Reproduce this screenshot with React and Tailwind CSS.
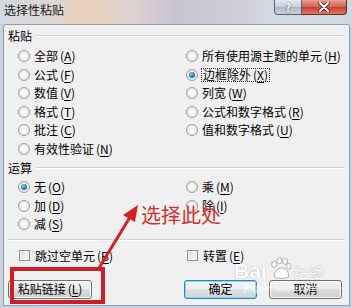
import React from "react";

const Key = ({ k }) => (
  <span className="ml-[2px]">
    (<span className="underline underline-offset-2">{k}</span>)
  </span>
);

const Radio = ({ checked }) => (
  <span className="w-[12px] h-[12px] shrink-0 rounded-full border border-[#9c9c9c] bg-[radial-gradient(circle_at_50%_50%,#fafafa_30%,#d9d9d9_100%)] flex items-center justify-center">
    {checked && (
      <span className="w-[6px] h-[6px] rounded-full bg-[radial-gradient(circle_at_40%_35%,#8fd0f0_0%,#2a77a8_55%,#174a6e_100%)]" />
    )}
  </span>
);

const Check = () => (
  <span className="w-[11px] h-[11px] shrink-0 border border-[#8f8f8f] bg-[linear-gradient(135deg,#dcdcdc,#fbfbfb)] shadow-[inset_0_0_0_1px_#f4f4f4]" />
);

const Option = ({ label, k, checked, focus }) => (
  <div className="h-[18.5px] flex items-center gap-[4px]">
    <Radio checked={checked} />
    <span
      className={
        focus
          ? "outline outline-1 outline-dotted outline-[#333] px-[1px] leading-[12px]"
          : "leading-[12px]"
      }
    >
      {label}
      <Key k={k} />
    </span>
  </div>
);

const Group = ({ title }) => (
  <div className="flex items-center gap-[4px] pl-[4px] pr-[4px] h-full">
    <span>{title}</span>
    <div className="flex-1 border-t border-[#d5d5d5] border-b border-b-white" />
  </div>
);

const App = () => {
  return (
    <div
      className="relative w-[352px] h-[308px] overflow-hidden bg-[#c9d3de] text-[12px] text-black"
      style={{ fontFamily: '"Noto Sans CJK SC", "Liberation Sans", sans-serif' }}
    >
      {/* title bar */}
      <div className="h-[24px] flex items-start bg-[linear-gradient(90deg,#d3dae3_0%,#dcd6d2_15%,#e9cfba_25%,#dcd3d3_38%,#c8c3d0_50%,#cdc9d6_62%,#d4dae3_80%,#cfd8e2_100%)]">
        <span className="pl-[4px] pt-[3px] leading-[14px] text-[12px] text-[#1b1b1b]">选择性粘贴</span>
        <div className="ml-auto mr-[5px] flex">
          <div className="w-[28px] h-[15px] rounded-bl-[4px] border border-t-0 border-[#5b6470] bg-[linear-gradient(#e6ebf0,#c5ced8_50%,#aeb9c6_51%,#c9d2dc)] flex items-center justify-center text-[11px] leading-none font-bold text-white [text-shadow:0_0_2px_#33414f]">
            ?
          </div>
          <div className="w-[45px] h-[15px] rounded-br-[4px] border border-l-0 border-t-0 border-[#6b2a24] bg-[linear-gradient(#e8a293,#d0604f_50%,#c4402e_51%,#d87d66)] flex items-center justify-center">
            <svg width="12" height="10" viewBox="0 0 12 10">
              <path d="M2 1 L10 9 M10 1 L2 9" stroke="#3a1510" strokeWidth="3.4" strokeLinecap="round" />
              <path d="M2 1 L10 9 M10 1 L2 9" stroke="#fff" strokeWidth="2" strokeLinecap="round" />
            </svg>
          </div>
        </div>
      </div>

      {/* dialog body */}
      <div className="ml-[3px] w-[347px] h-[282px] border border-[#8e9cab] rounded-t-[3px] bg-[#f0f0f0] flex flex-col">
        <div className="h-[22px]">
          <Group title="粘贴" />
        </div>
        <div className="grid grid-cols-[168px_1fr] pl-[14px]">
          <div className="flex flex-col">
            <Option label="全部" k="A" />
            <Option label="公式" k="F" />
            <Option label="数值" k="V" />
            <Option label="格式" k="T" />
            <Option label="批注" k="C" />
            <Option label="有效性验证" k="N" />
          </div>
          <div className="flex flex-col">
            <Option label="所有使用源主题的单元" k="H" />
            <Option label="边框除外" k="X" checked focus />
            <Option label="列宽" k="W" />
            <Option label="公式和数字格式" k="R" />
            <Option label="值和数字格式" k="U" />
          </div>
        </div>

        <div className="h-[20px]">
          <Group title="运算" />
        </div>
        <div className="grid grid-cols-[168px_1fr] pl-[14px]">
          <div className="flex flex-col">
            <Option label="无" k="O" checked />
            <Option label="加" k="D" />
            <Option label="减" k="S" />
          </div>
          <div className="flex flex-col">
            <Option label="乘" k="M" />
            <Option label="除" k="I" />
          </div>
        </div>

        <div className="mt-[5px] mx-[4px] border-t border-[#d5d5d5] border-b border-b-white" />

        <div className="h-[30px] grid grid-cols-[168px_1fr] pl-[15px] items-center">
          <div className="flex items-center gap-[5px]">
            <Check />
            <span>
              跳过空单元
              <Key k="B" />
            </span>
          </div>
          <div className="flex items-center gap-[5px]">
            <Check />
            <span>
              转置
              <Key k="E" />
            </span>
          </div>
        </div>

        <div className="mt-[9px] h-[19px] flex pl-[4px] pr-[7px]">
          <button className="w-[84px] h-full rounded-[3px] border border-[#707070] bg-[linear-gradient(#f2f2f2_0%,#ebebeb_45%,#dddddd_50%,#cfcfcf_100%)] shadow-[inset_0_0_0_1px_#fcfcfc] leading-none">
            粘贴链接
            <Key k="L" />
          </button>
          <button className="ml-auto w-[73px] h-full rounded-[3px] border border-[#3c7fb1] bg-[linear-gradient(#f4f7f9_0%,#eceff1_45%,#dfe2e4_50%,#d2d6d8_100%)] shadow-[inset_0_0_0_1px_#7fd8f5] leading-none">
            确定
          </button>
          <button className="ml-[12px] w-[73px] h-full rounded-[3px] border border-[#707070] bg-[linear-gradient(#f2f2f2_0%,#ebebeb_45%,#dddddd_50%,#cfcfcf_100%)] shadow-[inset_0_0_0_1px_#fcfcfc] leading-none">
            取消
          </button>
        </div>
      </div>

      {/* watermark */}
      <div className="absolute left-[234px] top-[256px] flex items-end text-white [text-shadow:0_0_1px_#8c8c8c] pointer-events-none">
        <span className="text-[21px] font-bold leading-none" style={{ fontFamily: '"Liberation Sans", sans-serif' }}>Bai</span>
        <svg width="25" height="25" viewBox="0 0 24 24" className="mx-[1px]">
          <g fill="#fff" stroke="#9c9c9c" strokeWidth="0.8">
            <ellipse cx="6" cy="8" rx="2.4" ry="3" />
            <ellipse cx="11" cy="4.5" rx="2.4" ry="3" />
            <ellipse cx="16.5" cy="5" rx="2.4" ry="3" />
            <ellipse cx="20" cy="10" rx="2.2" ry="2.8" />
            <path d="M6 20 C6 14 10 11.5 13 11.5 C16 11.5 20 14 20 20 C17 22 9 22 6 20 Z" />
          </g>
        </svg>
        <span className="text-[15px] leading-none mb-[2px]">经验</span>
      </div>
      <div className="absolute left-[244px] top-[284px] text-[9px] leading-none text-white/80 pointer-events-none" style={{ fontFamily: '"Liberation Sans", sans-serif' }}>
        jingyan.baidu.com
      </div>

      {/* annotation */}
      <div className="absolute left-[10px] top-[267px] w-[95px] h-[37px] border-[4px] border-[#cc1f26] pointer-events-none" />
      <svg className="absolute left-0 top-0 pointer-events-none" width="352" height="308" viewBox="0 0 352 308">
        <line x1="99" y1="268" x2="129.5" y2="218" stroke="#d42222" strokeWidth="3" />
        <polygon points="138,205 135,222 123,215" fill="#d42222" />
      </svg>
      <div className="absolute left-[141px] top-[205px] text-[20px] leading-none text-[#d0302f] pointer-events-none">
        选择此处
      </div>
    </div>
  );
};

export default App;
